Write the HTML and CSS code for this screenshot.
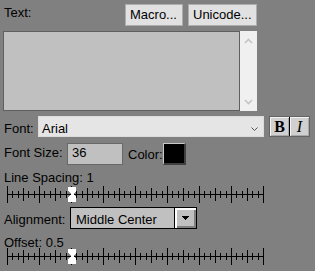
FILE: index.html
```html
<html lang="en">
<head>
    <meta charset="UTF-8">
    <link rel="stylesheet" href="styles.css">
</head>
<body>
    <div class="panel">
        <div class="head">
            <span class="head-lbl">Text:</span>
            <button class="btn macro">Macro...</button>
            <button class="btn uni">Unicode...</button>
        </div>

        <div class="textbox">
            <div class="area"></div>
            <div class="vscroll">
                <svg width="9" height="6"><path d="M1 5 L4.5 1.5 L8 5" /></svg>
                <svg width="9" height="6"><path d="M1 1 L4.5 4.5 L8 1" /></svg>
            </div>
        </div>

        <div class="row font-row">
            <span class="lbl font-lbl">Font:</span>
            <div class="font-select">
                <span class="sel-text">Arial</span>
                <svg class="chev" width="7" height="5"><path d="M0.5 0.5 L3.5 3.5 L6.5 0.5" /></svg>
            </div>
            <div class="styles">
                <button class="sty bold">B</button>
                <button class="sty ital">I</button>
            </div>
        </div>

        <div class="row size-row">
            <span class="lbl size-lbl">Font Size:</span>
            <div class="size-input">36</div>
            <span class="lbl color-lbl">Color:</span>
            <div class="swatch"></div>
        </div>

        <div class="cap spacing-cap">Line Spacing: 1</div>
        <svg class="slider" width="270" height="17">
            <g class="ticks"></g>
            <rect x="7" y="8" width="257" height="1" />
            <polygon class="thumb" points="68,1 76,1 76,5 73,8 76,11 76,16 68,16 68,11 71,8 68,5" />
        </svg>

        <div class="row align-row">
            <span class="lbl align-lbl">Alignment:</span>
            <div class="combo">
                <span class="combo-text">Middle Center</span>
                <div class="drop">
                    <svg width="7" height="4">
                        <rect x="0" y="0" width="7" height="1" />
                        <rect x="1" y="1" width="5" height="1" />
                        <rect x="2" y="2" width="3" height="1" />
                        <rect x="3" y="3" width="1" height="1" />
                    </svg>
                </div>
            </div>
        </div>

        <div class="cap offset-cap">Offset: 0.5</div>
        <svg class="slider" width="270" height="17">
            <g class="ticks"></g>
            <rect x="7" y="8" width="257" height="1" />
            <polygon class="thumb" points="68,1 76,1 76,5 73,8 76,11 76,16 68,16 68,11 71,8 68,5" />
        </svg>
    </div>

<script>
    // tick marks: 48 steps, longer every 3rd and 6th
    document.querySelectorAll('.ticks').forEach(g => {
        let out = '';
        for (let k = 0; k <= 48; k++) {
            const x = 7 + Math.round(k * 16 / 3);
            const y = k % 6 === 0 ? 0 : (k % 3 === 0 ? 2 : 5);
            out += `<rect x="${x}" y="${y}" width="1" height="${17 - 2 * y}"/>`;
        }
        g.innerHTML = out;
    });
</script>
</body>
</html>
```

FILE: styles.css
```css
body {
    margin: 0;
    background-color: #808080;
    font-family: "Liberation Sans", Arial, sans-serif;
    font-size: 13px;
    color: #000;
}
.panel {
    width: 315px;
    height: 271px;
    overflow: hidden;
}
.head {
    display: flex;
    align-items: flex-start;
    width: 257px;
    height: 22px;
    margin-top: 4px;
}
.head-lbl {
    margin-left: 4px;
    line-height: 15px;
    padding-top: 1px;
}
.btn {
    height: 22px;
    border: 1px solid #adadad;
    background-color: #e1e1e1;
    font: inherit;
    color: #000;
    padding: 0 0 0 4px;
    text-align: left;
    line-height: 20px;
}
.macro {
    margin-left: auto;
    width: 58px;
}
.uni {
    margin-left: 5px;
    width: 69px;
}
.textbox {
    display: flex;
    height: 80px;
    margin: 5px 0 0 3px;
}
.area {
    width: 235px;
    border: 1px solid #5f5f5f;
    background-color: #c0c0c0;
}
.vscroll {
    width: 17px;
    background-color: #f0f0f0;
    display: flex;
    flex-direction: column;
    justify-content: space-between;
    align-items: center;
    padding: 7px 0 6px;
    box-sizing: border-box;
}
.vscroll path {
    fill: none;
    stroke: #c4c4c4;
    stroke-width: 1.6;
}
.row {
    display: flex;
    align-items: flex-start;
}
.lbl {
    margin-left: 4px;
    line-height: 15px;
}
.font-row {
    height: 21px;
    margin-top: 5px;
}
.font-lbl {
    width: 34px;
    padding-top: 5px;
}
.font-select {
    display: flex;
    align-items: flex-start;
    width: 226px;
    height: 21px;
    box-sizing: border-box;
    border: 1px solid #dcdcdc;
    background-color: #e5e5e5;
}
.sel-text {
    flex: 1;
    padding: 4px 0 0 3px;
    line-height: 15px;
}
.chev {
    margin: 10px 5px 0 0;
}
.chev path {
    fill: none;
    stroke: #555;
    stroke-width: 1;
}
.styles {
    display: flex;
    margin-left: 5px;
    border: 1px solid #646464;
}
.sty {
    width: 20px;
    height: 19px;
    padding: 0;
    border: none;
    background-color: #d0d0d0;
    box-shadow: inset 1px 1px #f2f2f2, inset -1px -1px #a8a8a8;
    font-family: "Liberation Serif", "Times New Roman", serif;
    font-size: 16px;
    line-height: 19px;
    color: #000;
}
.bold {
    font-weight: bold;
    border-right: 1px solid #000;
}
.ital {
    width: 19px;
    font-style: italic;
}
.size-row {
    height: 22px;
    margin-top: 6px;
}
.size-lbl {
    width: 63px;
    padding-top: 2px;
}
.size-input {
    width: 56px;
    height: 22px;
    box-sizing: border-box;
    border: 1px solid #686868;
    background-color: #c0c0c0;
    padding: 1px 0 0 4px;
    line-height: 15px;
}
.color-lbl {
    width: 35px;
    margin-left: 5px;
    padding-top: 4px;
}
.swatch {
    width: 23px;
    height: 22px;
    box-sizing: border-box;
    border-style: solid;
    border-width: 1px 2px 2px 1px;
    border-color: #c8c8c8 #404040 #404040 #c8c8c8;
    background-color: #000;
}
.cap {
    margin-left: 4px;
    line-height: 13px;
}
.spacing-cap {
    margin-top: 6px;
}
.offset-cap {
    margin-top: 7px;
}
.slider {
    display: block;
    margin-top: 2px;
    shape-rendering: crispEdges;
    fill: #000;
}
.offset-cap + .slider {
    margin-top: -1px;
}
.slider .thumb {
    fill: #fff;
}
.align-row {
    height: 22px;
    margin-top: 4px;
}
.align-lbl {
    width: 62px;
    padding-top: 5px;
}
.combo {
    display: flex;
    margin-left: 4px;
    width: 127px;
    height: 22px;
    box-sizing: border-box;
    border: 1px solid #000;
    background-color: #c0c0c0;
}
.combo-text {
    flex: 1;
    padding: 4px 0 0 5px;
    line-height: 15px;
}
.drop {
    display: flex;
    align-items: center;
    justify-content: center;
    width: 22px;
    box-sizing: border-box;
    border-left: 1px solid #000;
    background-color: #c0c0c0;
    box-shadow: inset 2px 2px #fff, inset -2px -2px #808080;
}
.drop svg {
    shape-rendering: crispEdges;
    fill: #000;
}
```
